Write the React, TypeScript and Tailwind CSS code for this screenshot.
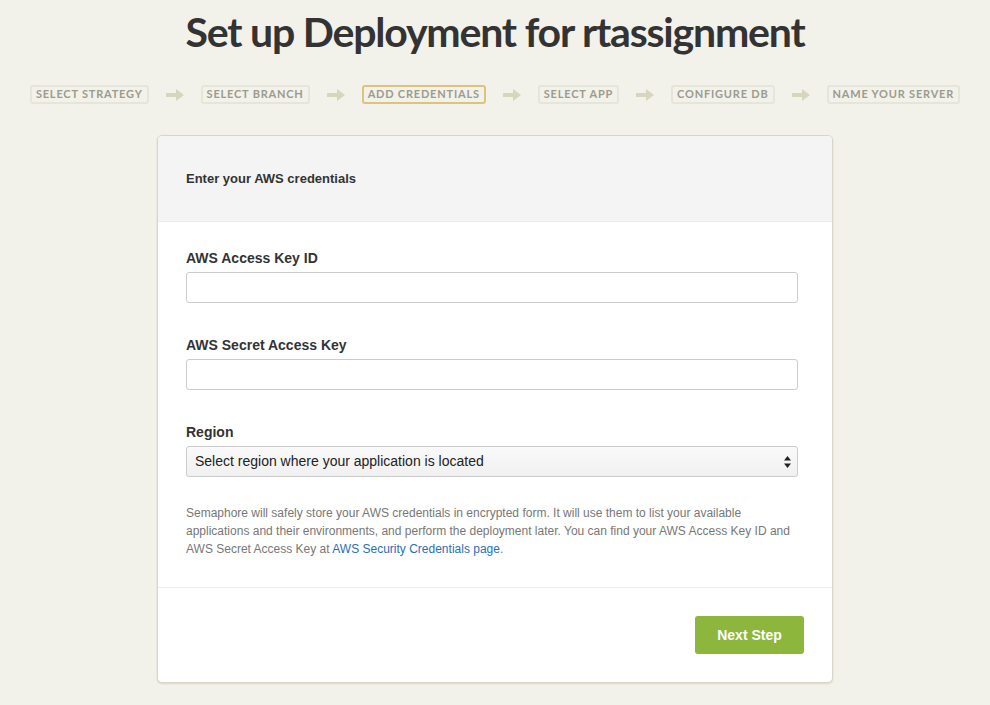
import React from 'react';

const steps = ['Select Strategy', 'Select Branch', 'Add Credentials', 'Select App', 'Configure DB', 'Name Your Server'];

const Arrow = () => (
  <svg width="18" height="12" viewBox="0 0 18 12" className="shrink-0">
    <path d="M0 4h10V0l8 6-8 6V8H0z" fill="#d6d6bf" />
  </svg>
);

const Field: React.FC<{ label: string }> = ({ label }) => (
  <div className="mb-[33px]">
    <label className="block text-[14px] font-bold text-[#333] mb-[5px] leading-[18px]">{label}</label>
    <input className="block w-full h-[31px] border border-[#ccc] rounded-[3px] bg-white px-2 outline-none" />
  </div>
);

const App: React.FC = () => {
  return (
    <div className="min-h-[705px] bg-[#f2f1ea] flex flex-col items-center" style={{ fontFamily: '"Liberation Sans", Arial, sans-serif' }}>
      <h1 className="pt-[6px] text-[41px] leading-[52px] font-bold text-[#333] tracking-[-1.2px]" style={{ fontFamily: 'Lato, "Open Sans", sans-serif' }}>
        Set up Deployment for rtassignment
      </h1>
      <div className="mt-[27px] flex items-center gap-[17px]" style={{ fontFamily: 'Lato, "Open Sans", sans-serif' }}>
        {steps.map((s, i) => (
          <React.Fragment key={s}>
            {i > 0 && <Arrow />}
            <div
              className={`px-[4px] h-[19px] flex items-center rounded-[3px] border-2 text-[11px] font-bold uppercase tracking-[0.8px] text-[#9b9b8e] ${
                s === 'Add Credentials' ? 'border-[#dcc47e]' : 'border-[#e6e5da]'
              }`}
            >
              {s}
            </div>
          </React.Fragment>
        ))}
      </div>
      <div className="mt-[31px] w-[676px] bg-white border border-[#d8d7c6] rounded-[5px] shadow-[0_1px_2px_rgba(0,0,0,0.12)] overflow-hidden">
        <div className="h-[86px] bg-[#f4f4f4] border-b border-[#ebebeb] flex items-center px-[28px]">
          <span className="text-[13px] font-bold text-[#333]">Enter your AWS credentials</span>
        </div>
        <div className="pl-[28px] pr-[34px] pt-[27px] pb-[29px] border-b border-[#ebebeb]">
          <Field label="AWS Access Key ID" />
          <Field label="AWS Secret Access Key" />
          <div>
            <label className="block text-[14px] font-bold text-[#333] mb-[5px] leading-[18px]">Region</label>
            <div className="relative h-[31px] border border-[#ccc] rounded-[3px] bg-gradient-to-b from-[#fafafa] to-[#f0f0f0] flex items-center px-[8px] text-[14px] text-[#222]">
              Select region where your application is located
              <svg width="7" height="12" viewBox="0 0 7 12" className="absolute right-[6px] top-[9px]">
                <path d="M3.5 0L7 4.5H0z M3.5 12L0 7.5h7z" fill="#222" />
              </svg>
            </div>
          </div>
          <p className="mt-[27px] text-[12px] leading-[18px] text-[#777]">
            Semaphore will safely store your AWS credentials in encrypted form. It will use them to list your available applications and their environments, and perform the deployment later. You can find your AWS Access Key ID and AWS Secret Access Key at{' '}
            <a className="text-[#2a6ebb]">AWS Security Credentials page</a>.
          </p>
        </div>
        <div className="h-[94px] flex items-center justify-end pr-[28px]">
          <button className="w-[109px] h-[38px] rounded-[3px] bg-[#8db63d] text-white text-[14px] font-bold">Next Step</button>
        </div>
      </div>
    </div>
  );
};

export default App;
